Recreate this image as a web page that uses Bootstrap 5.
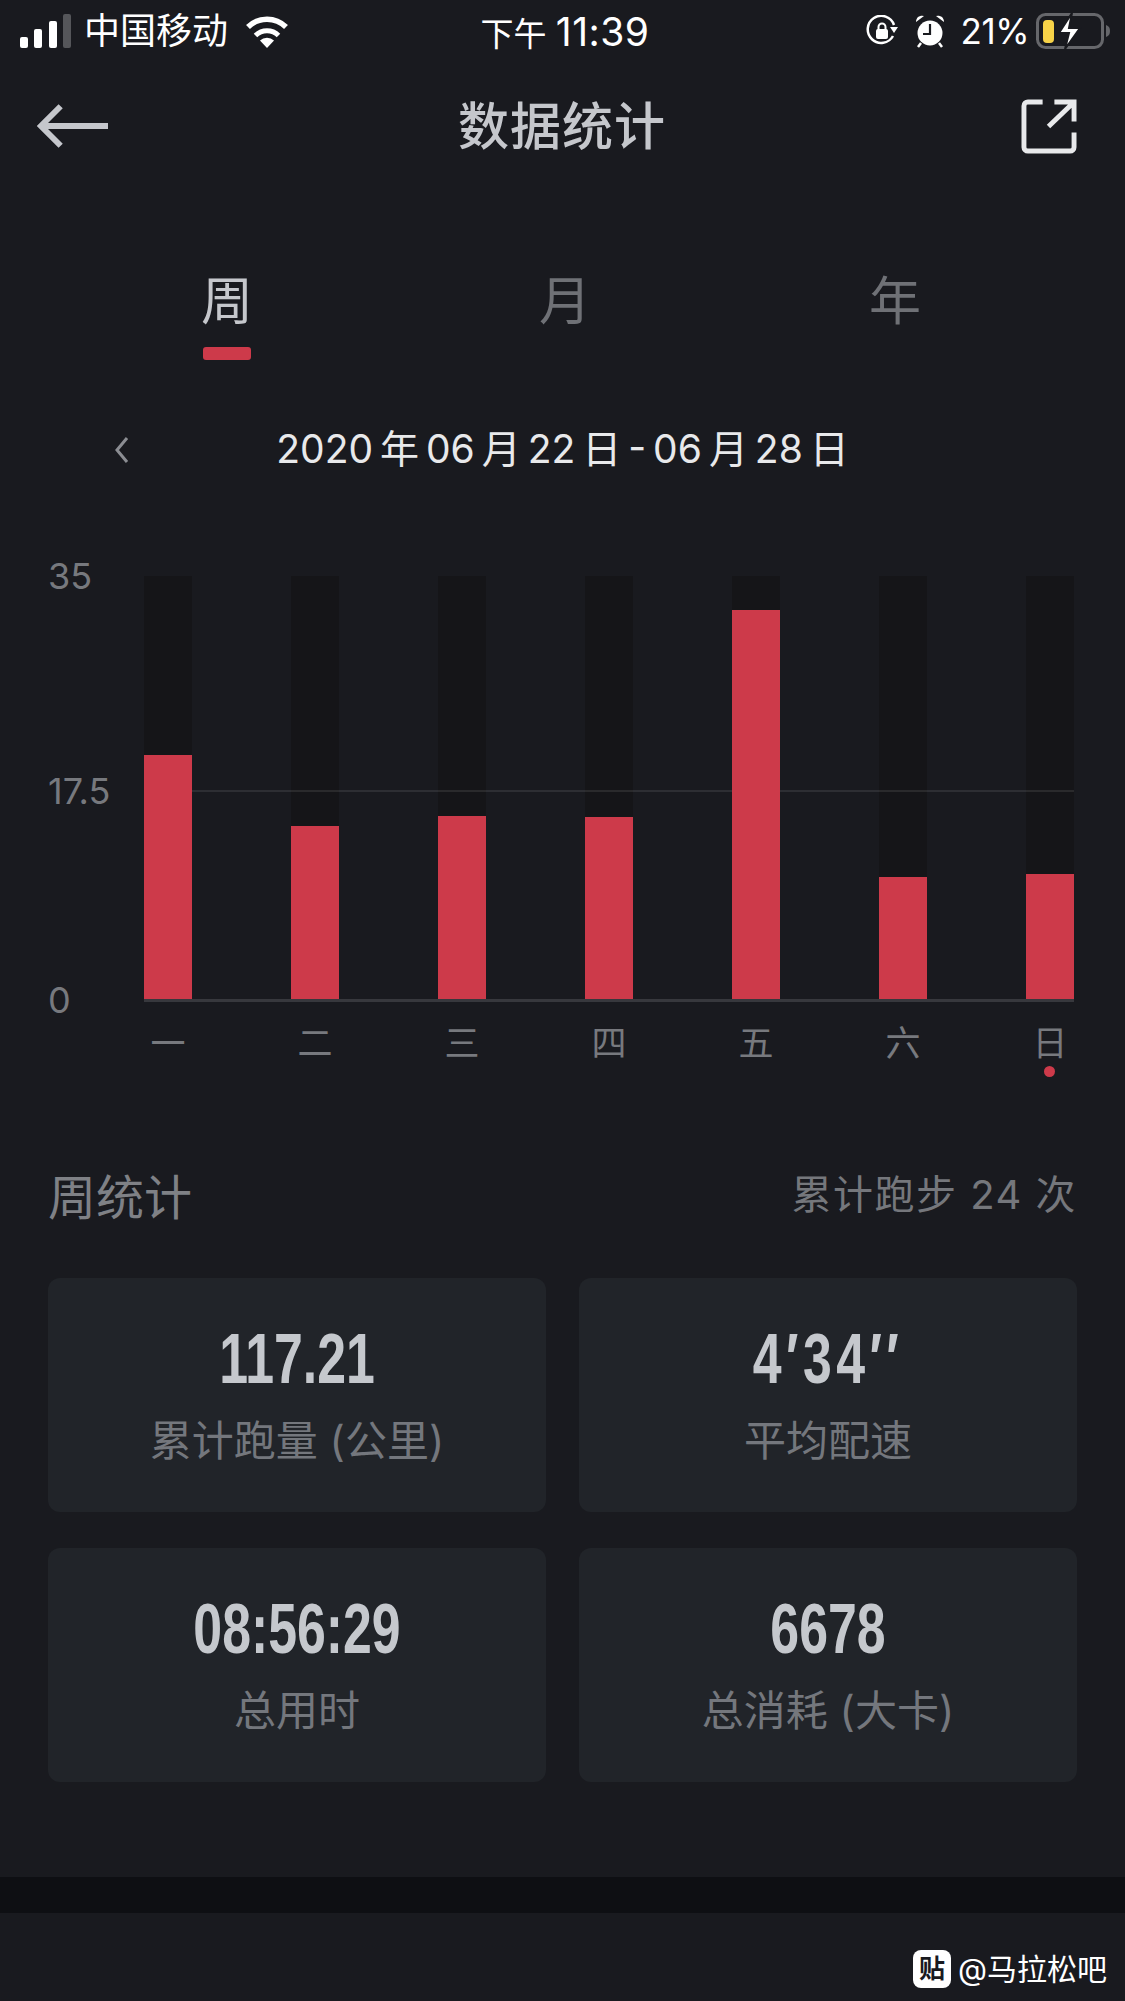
<!doctype html>
<html lang="zh-CN">
<head>
  <meta charset="utf-8">
  <meta name="viewport" content="width=device-width, initial-scale=1">
  <title>数据统计</title>
  <link href="https://cdn.jsdelivr.net/npm/bootstrap@5.3.0/dist/css/bootstrap.min.css" rel="stylesheet">
  <style>
    body {
      background-color: #191a1f;
      font-family: Inter, "Noto Sans CJK SC", sans-serif;
      height: 2001px;
      overflow: hidden;
    }
    .status-bar { height: 62px; padding: 0 15px 0 20px; color: #fff; }
    .carrier { font-size: 36px; margin-left: 12px; margin-right: 17px; line-height: 1; }
    .clock { font-size: 33px; line-height: 1; }
    .clock-num { font-size: 39px; letter-spacing: .5px; }
    .status-left, .status-right { width: 400px; }
    .battery-pct { font-size: 35px; line-height: 1; margin: 0 7px 0 15px; letter-spacing: -.5px; }
    .app-bar { height: 128px; padding: 0 48px 0 37px; }
    .app-title { font-size: 51px; font-weight: 500; color: #c5c7cc; line-height: 1; letter-spacing: 1px; }
    .app-back { width: 72px; }
    .app-share { width: 62px; }
    .tabs-row { margin: 77px 63px 0 60px; }
    .tab-item { color: #6f7176; font-size: 52px; line-height: 70px; text-align: center; }
    .tab-item.is-on { color: #c5c7cc; }
    .tab-mark { width: 48px; height: 13px; border-radius: 3px; background: #cd3a4a; margin: 10px auto 0; }
    .tab-blank { height: 13px; margin-top: 10px; }
    .date-row { height: 60px; margin-top: 59px; color: #e8e9eb; font-size: 39px; line-height: 60px; text-align: center; word-spacing: -4px; position: relative; }
    .date-back { position: absolute; left: 114px; top: 17px; }
    .chart-wrap { margin: 74px 48px 0; }
    .y-axis { width: 96px; height: 468px; margin-top: 1px; color: #77797e; font-size: 36px; line-height: 44px; }
    .y-axis .mid-tick { margin-top: 6px; }
    .plot-col { width: 930px; margin-top: 23px; }
    .plot { height: 426px; border-bottom: 3px solid #37383d; position: relative; }
    .mid-line { position: absolute; left: 0; right: 0; top: 214px; height: 2px; background: rgba(255, 255, 255, .09); z-index: 1; }
    .bar-track { width: 48px; height: 100%; background: #151518; position: relative; }
    .bar-fill { position: absolute; left: 0; right: 0; bottom: 0; background: #cd3a4a; z-index: 2; }
    .day-labels { margin-top: 16px; }
    .day-label { width: 48px; text-align: center; color: #77797e; font-size: 35px; line-height: 50px; position: relative; }
    .today-dot { position: absolute; left: 18px; top: 48px; width: 11px; height: 11px; border-radius: 50%; background: #cd3a4a; }
    .stat-head { margin: 90px 48px 0; height: 80px; }
    .stat-title { font-size: 48px; color: #7f8186; line-height: 80px; }
    .stat-total { font-size: 40px; color: #75777c; line-height: 74px; letter-spacing: 1.5px; }
    .stat-grid { display: grid; grid-template-columns: 498px 498px; column-gap: 33px; row-gap: 36px; margin: 40px 48px 0; }
    .stat-box { height: 234px; border-radius: 12px; background: #212429; text-align: center; padding-top: 43px; }
    .stat-num { font-family: "Liberation Sans", sans-serif; font-weight: 700; font-size: 70px; line-height: 76px; color: #c5c8cd; transform: scaleX(.74); }
    .stat-num-wide { letter-spacing: 6px; }
    .stat-label { font-size: 42px; line-height: 50px; color: #74777d; margin-top: 19px; }
    .dark-band { height: 36px; margin-top: 95px; background: #0e0f13; }
    .watermark { margin: 37px 18px 0 0; color: #fff; font-size: 30px; line-height: 38px; }
    .wm-icon { width: 38px; height: 38px; border-radius: 8px; background: #fff; color: #191a1f; font-size: 26px; font-weight: 700; line-height: 38px; text-align: center; margin-right: 7px; }
  </style>
</head>
<body>
  <div class="status-bar d-flex align-items-center justify-content-between">
    <div class="status-left d-flex align-items-center">
      <svg width="52" height="34" viewBox="0 0 52 34"><rect x="0" y="23" width="8" height="11" rx="2" fill="#fff"/><rect x="14" y="15" width="8" height="19" rx="2" fill="#fff"/><rect x="29" y="7" width="8" height="27" rx="2" fill="#fff"/><rect x="43" y="0" width="8" height="34" rx="2" fill="#55565a"/></svg>
      <span class="carrier">中国移动</span>
      <svg width="44" height="34" viewBox="0 0 44 34"><path d="M22 34 15 26.500A10 10 0 0 1 29 26.500Z" fill="#fff"/><path d="M10.500 21.500A16.500 16.500 0 0 1 33.500 21.500" fill="none" stroke="#fff" stroke-width="5"/><path d="M3 13A27 27 0 0 1 41 13" fill="none" stroke="#fff" stroke-width="5.500"/></svg>
    </div>
    <span class="clock">下午 <span class="clock-num">11:39</span></span>
    <div class="status-right d-flex align-items-center justify-content-end">
      <svg width="32" height="32" viewBox="0 0 32 32" class="me-3"><path d="M27 21A13.500 13.500 0 1 1 28 10" fill="none" stroke="#fff" stroke-width="2.500"/><path d="M24 12h8l-4 6z" fill="#fff"/><rect x="10" y="14" width="12" height="10" rx="2" fill="#fff"/><path d="M12.500 15v-3a3.500 3.500 0 0 1 7 0v3" fill="none" stroke="#fff" stroke-width="2"/></svg>
      <svg width="32" height="34" viewBox="0 0 32 34"><circle cx="16" cy="19" r="12.500" fill="#fff"/><path d="M16 10v10h-7" fill="none" stroke="#191a1f" stroke-width="2.200"/><path d="M2 8a6 6 0 0 1 8-6zM30 8a6 6 0 0 0-8-6z" fill="#fff"/><path d="M7 29l-3 4M25 29l3 4" stroke="#fff" stroke-width="2.500"/></svg>
      <span class="battery-pct">21%</span>
      <svg width="74" height="36" viewBox="0 0 74 36"><rect x="1.500" y="1.500" width="65" height="33" rx="8" fill="none" stroke="#66676b" stroke-width="3"/><rect x="7" y="7" width="11" height="23" rx="4" fill="#f7d348"/><path d="M36 0 23 20h10l-4 16 15-21H33z" fill="#fff" stroke="#191a1f" stroke-width="2"/><path d="M70 12c3 1 4 3 4 6s-1 5-4 6z" fill="#66676b"/></svg>
    </div>
  </div>

  <div class="app-bar d-flex align-items-center justify-content-between">
    <div class="app-back">
      <svg width="71" height="46" viewBox="0 0 72 46"><path d="M72 23H4M24 3 4 23l20 20" fill="none" stroke="#c5c7cc" stroke-width="6"/></svg>
    </div>
    <div class="app-title">数据统计</div>
    <div class="app-share d-flex justify-content-end">
      <svg width="56" height="55" viewBox="0 0 57 56"><path d="M22 3H7a4 4 0 0 0-4 4v42a4 4 0 0 0 4 4h43a4 4 0 0 0 4-4V34" fill="none" stroke="#e8e9eb" stroke-width="5"/><path d="M28 28 53 4M34 3h20v20" fill="none" stroke="#e8e9eb" stroke-width="5"/></svg>
    </div>
  </div>

  <div class="row g-0 tabs-row">
    <div class="col-4 tab-item is-on">周<div class="tab-mark"></div></div>
    <div class="col-4 tab-item ps-2">月<div class="tab-blank"></div></div>
    <div class="col-4 tab-item">年<div class="tab-blank"></div></div>
  </div>

  <div class="date-row">
    <svg class="date-back" width="15" height="28" viewBox="0 0 15 28"><path d="M13 2 3 14l10 12" fill="none" stroke="#8b8d92" stroke-width="3"/></svg>
    2020 年 06 月 22 日 - 06 月 28 日
  </div>

  <div class="chart-wrap d-flex">
    <div class="y-axis d-flex flex-column justify-content-between">
      <span>35</span>
      <span class="mid-tick">17.5</span>
      <span>0</span>
    </div>
    <div class="plot-col">
      <div class="plot d-flex justify-content-between">
        <div class="mid-line"></div>
        <div class="bar-track"><div class="bar-fill" style="height: 244px"></div></div>
        <div class="bar-track"><div class="bar-fill" style="height: 173px"></div></div>
        <div class="bar-track"><div class="bar-fill" style="height: 183px"></div></div>
        <div class="bar-track"><div class="bar-fill" style="height: 182px"></div></div>
        <div class="bar-track"><div class="bar-fill" style="height: 389px"></div></div>
        <div class="bar-track"><div class="bar-fill" style="height: 122px"></div></div>
        <div class="bar-track"><div class="bar-fill" style="height: 125px"></div></div>
      </div>
      <div class="day-labels d-flex justify-content-between">
        <div class="day-label">一</div>
        <div class="day-label">二</div>
        <div class="day-label">三</div>
        <div class="day-label">四</div>
        <div class="day-label">五</div>
        <div class="day-label">六</div>
        <div class="day-label">日<span class="today-dot"></span></div>
      </div>
    </div>
  </div>

  <div class="stat-head d-flex justify-content-between">
    <div class="stat-title">周统计</div>
    <div class="stat-total">累计跑步 24 次</div>
  </div>

  <div class="stat-grid">
    <div class="stat-box"><div class="stat-num">117.21</div><div class="stat-label">累计跑量 (公里)</div></div>
    <div class="stat-box"><div class="stat-num stat-num-wide">4′34′′</div><div class="stat-label">平均配速</div></div>
    <div class="stat-box"><div class="stat-num">08:56:29</div><div class="stat-label">总用时</div></div>
    <div class="stat-box"><div class="stat-num">6678</div><div class="stat-label">总消耗 (大卡)</div></div>
  </div>

  <div class="dark-band"></div>
  <div class="watermark d-flex justify-content-end">
    <div class="wm-icon">贴</div>
    <div>@马拉松吧</div>
  </div>

  <script src="https://cdn.jsdelivr.net/npm/bootstrap@5.3.0/dist/js/bootstrap.bundle.min.js"></script>
</body>
</html>
